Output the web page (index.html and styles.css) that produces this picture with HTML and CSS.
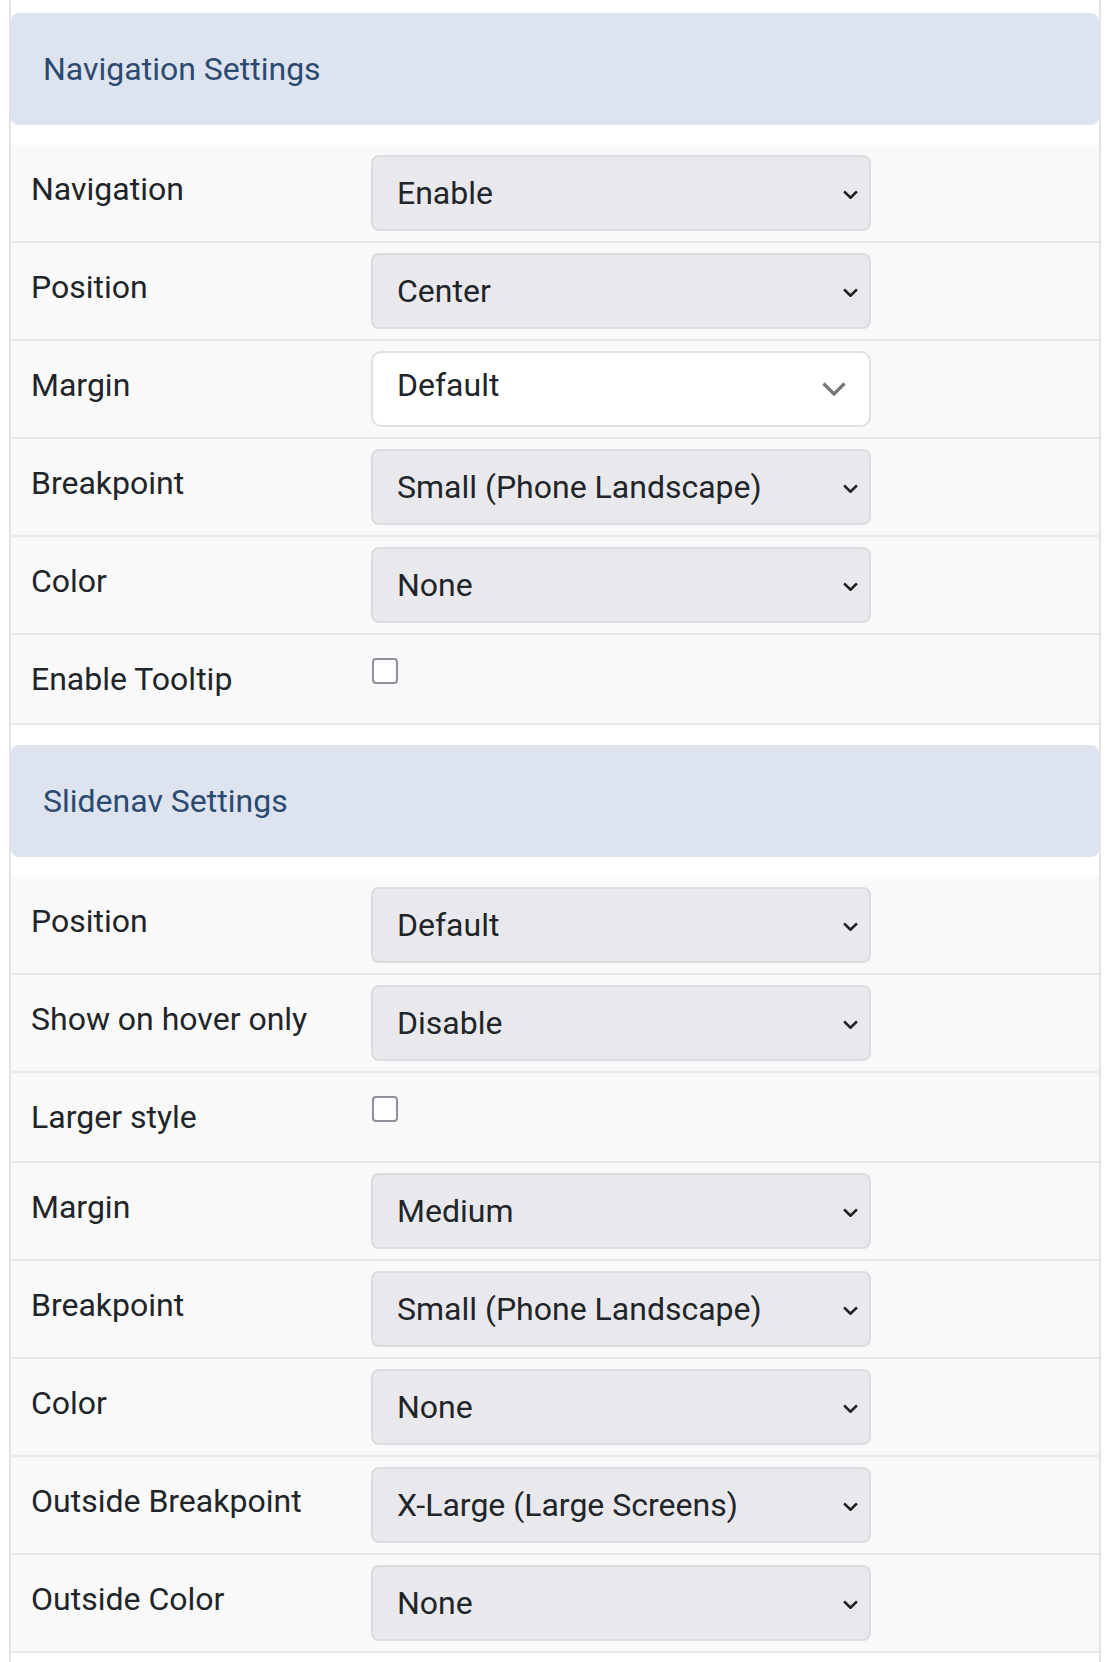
FILE: index.html
```html
<!DOCTYPE html>
<html lang="en">
<head>
    <meta charset="UTF-8">
    <meta name="viewport" content="width=device-width, initial-scale=1.0">
    <title>Slider Settings</title>
    <link rel="stylesheet" href="styles.css">
</head>
<body>

    <div class="panel">

        <div class="section-title">Navigation Settings</div>

        <div class="field">
            <label class="field-label">Navigation</label>
            <div class="select"><span>Enable</span><svg class="caret" viewBox="0 0 14 8"><path d="M1 1l6 6 6-6"/></svg></div>
        </div>
        <div class="field">
            <label class="field-label">Position</label>
            <div class="select"><span>Center</span><svg class="caret" viewBox="0 0 14 8"><path d="M1 1l6 6 6-6"/></svg></div>
        </div>
        <div class="field">
            <label class="field-label">Margin</label>
            <div class="select select-light"><span>Default</span><svg class="caret-light" viewBox="0 0 24 14"><path d="M1.5 1.5l10.5 10.5 10.5-10.5"/></svg></div>
        </div>
        <div class="field">
            <label class="field-label">Breakpoint</label>
            <div class="select"><span>Small (Phone Landscape)</span><svg class="caret" viewBox="0 0 14 8"><path d="M1 1l6 6 6-6"/></svg></div>
        </div>
        <div class="field">
            <label class="field-label">Color</label>
            <div class="select"><span>None</span><svg class="caret" viewBox="0 0 14 8"><path d="M1 1l6 6 6-6"/></svg></div>
        </div>
        <div class="field">
            <label class="field-label">Enable Tooltip</label>
            <div><span class="checkbox"></span></div>
        </div>

        <div class="section-title">Slidenav Settings</div>

        <div class="field">
            <label class="field-label">Position</label>
            <div class="select"><span>Default</span><svg class="caret" viewBox="0 0 14 8"><path d="M1 1l6 6 6-6"/></svg></div>
        </div>
        <div class="field">
            <label class="field-label">Show on hover only</label>
            <div class="select"><span>Disable</span><svg class="caret" viewBox="0 0 14 8"><path d="M1 1l6 6 6-6"/></svg></div>
        </div>
        <div class="field">
            <label class="field-label">Larger style</label>
            <div><span class="checkbox"></span></div>
        </div>
        <div class="field">
            <label class="field-label">Margin</label>
            <div class="select"><span>Medium</span><svg class="caret" viewBox="0 0 14 8"><path d="M1 1l6 6 6-6"/></svg></div>
        </div>
        <div class="field">
            <label class="field-label">Breakpoint</label>
            <div class="select"><span>Small (Phone Landscape)</span><svg class="caret" viewBox="0 0 14 8"><path d="M1 1l6 6 6-6"/></svg></div>
        </div>
        <div class="field">
            <label class="field-label">Color</label>
            <div class="select"><span>None</span><svg class="caret" viewBox="0 0 14 8"><path d="M1 1l6 6 6-6"/></svg></div>
        </div>
        <div class="field">
            <label class="field-label">Outside Breakpoint</label>
            <div class="select"><span>X-Large (Large Screens)</span><svg class="caret" viewBox="0 0 14 8"><path d="M1 1l6 6 6-6"/></svg></div>
        </div>
        <div class="field">
            <label class="field-label">Outside Color</label>
            <div class="select"><span>None</span><svg class="caret" viewBox="0 0 14 8"><path d="M1 1l6 6 6-6"/></svg></div>
        </div>

    </div>

</body>
</html>
```

FILE: styles.css
```css
body {
    margin: 0;
    padding: 0;
    font-family: Roboto, "Noto Sans", Arial, sans-serif;
    font-size: 32px;
    line-height: 1.5;
    color: #212529;
    background-color: #fff;
}

.panel {
    margin-left: 9px;
    width: 1088px;
    padding: 13px 0 20px;
    border-left: 2px solid #e3e3e3;
    border-right: 2px solid #e3e3e3;
}

.section-title {
    margin-bottom: 20px;
    padding: 32px 32px;
    background-color: #dde4f0;
    color: #2c4a70;
    border-radius: 8px;
}

.field + .section-title {
    margin-top: 20px;
}

.field {
    display: grid;
    grid-template-columns: 340px 500px;
    padding: 10px 20px;
    background-color: #f9f9f9;
    border-bottom: 2px solid #e9e9e9;
}

.field-label {
    padding: 10px 0 10px;
}

.select {
    box-sizing: border-box;
    height: 76px;
    padding: 12px 11px 12px 24px;
    display: flex;
    align-items: center;
    justify-content: space-between;
    background-color: #e9e9ed;
    border: 2px solid #dcdce0;
    border-radius: 8px;
}

.caret {
    width: 15px;
    height: 9px;
    margin-top: 3px;
    fill: none;
    stroke: #1f1f1f;
    stroke-width: 2.4;
}

.select-light {
    background-color: #fff;
    border-color: #dee2e6;
    border-radius: 10px;
    padding-right: 23px;
    padding-bottom: 16px;
    padding-top: 8px;
}

.caret-light {
    width: 24px;
    height: 14px;
    margin-top: 8px;
    fill: none;
    stroke: #777;
    stroke-width: 3.2;
}

.checkbox {
    display: block;
    box-sizing: border-box;
    width: 26px;
    height: 26px;
    margin: 13px 0 0 1px;
    background-color: #fff;
    border: 2px solid #8f8f9d;
    border-radius: 4px;
}
```
